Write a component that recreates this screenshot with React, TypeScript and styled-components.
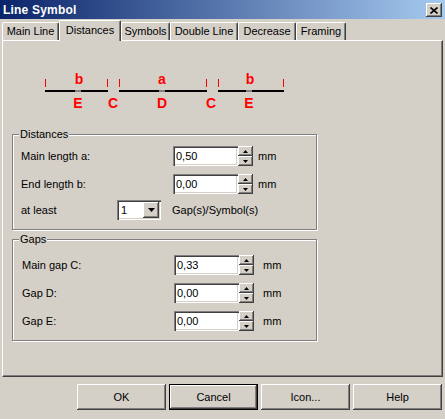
import React from 'react';
import styled, {createGlobalStyle, css} from 'styled-components';

const GlobalStyle = createGlobalStyle`
  html, body {
    margin: 0;
    padding: 0;
    background: #d4d0c8;
  }
  body {
    font-family: "Liberation Sans", Arial, sans-serif;
    font-size: 11px;
    color: #000;
  }
`;

const raised = css`
  background: #d4d0c8;
  box-shadow: inset -1px -1px 0 #404040, inset 1px 1px 0 #ffffff, inset -2px -2px 0 #808080;
`;

const sunken = css`
  background: #ffffff;
  box-shadow: inset 1px 1px 0 #808080, inset 2px 2px 0 #404040, inset -1px -1px 0 #ffffff, inset -2px -2px 0 #d4d0c8;
`;

const tabs = [
    {label: 'Main Line', w: 57},
    {label: 'Distances', w: 62, active: true},
    {label: 'Symbols', w: 49},
    {label: 'Double Line', w: 68},
    {label: 'Decrease', w: 58},
    {label: 'Framing', w: 50},
];

const UpArrow = () => (
    <svg width="5" height="3" viewBox="0 0 5 3"><polygon points="2.5,0 5,3 0,3" fill="#000"/></svg>
);
const DownArrow = ({w = 5, h = 3}: { w?: number; h?: number }) => (
    <svg width={w} height={h} viewBox={`0 0 ${w} ${h}`}><polygon points={`0,0 ${w},0 ${w / 2},${h}`} fill="#000"/></svg>
);

const SpinField = ({value}: { value: string }) => (
    <>
        <Field>{value}</Field>
        <Spinner>
            <SpinBtn><UpArrow/></SpinBtn>
            <SpinBtn><DownArrow/></SpinBtn>
        </Spinner>
    </>
);

const Diagram = () => (
    <DiagramSvg width="280" height="46" viewBox="0 0 280 46">
        <rect x="33" y="26" width="63" height="2" fill="#000"/>
        <rect x="107" y="26" width="88" height="2" fill="#000"/>
        <rect x="206" y="26" width="66" height="2" fill="#000"/>
        <rect x="63" y="26" width="6" height="2" fill="#808080"/>
        <rect x="147" y="26" width="6" height="2" fill="#808080"/>
        <rect x="234" y="26" width="6" height="2" fill="#808080"/>
        {[33, 95, 107, 194, 206, 271].map((x) => (
            <rect key={x} x={x} y="15" width="1" height="8" fill="#ff0000"/>
        ))}
        <g fill="#ff0000" fontFamily="Liberation Sans, Arial, sans-serif" fontWeight="bold" fontSize="14" textAnchor="middle">
            <text x="67" y="20">b</text>
            <text x="150" y="20">a</text>
            <text x="238" y="20">b</text>
            <text x="66" y="44">E</text>
            <text x="101" y="44">C</text>
            <text x="150" y="44">D</text>
            <text x="199" y="44">C</text>
            <text x="237" y="44">E</text>
        </g>
    </DiagramSvg>
);

const App = () => {
    return (
        <Window>
            <GlobalStyle/>
            <TitleBar>
                <Title>Line Symbol</Title>
                <CloseButton>
                    <svg width="8" height="7" viewBox="0 0 8 7">
                        <path d="M0.5 0.5 L7.5 6.5 M7.5 0.5 L0.5 6.5" stroke="#000" strokeWidth="1.6"/>
                    </svg>
                </CloseButton>
            </TitleBar>
            <TabStrip>
                {tabs.map((t) => (
                    <Tab key={t.label} $w={t.w} $active={!!t.active}>{t.label}</Tab>
                ))}
            </TabStrip>
            <Panel>
                <Diagram/>
                <GroupBox $top={5}>
                    <Legend>Distances</Legend>
                    <Row>
                        <Label $w={152}>Main length a:</Label>
                        <SpinField value="0,50"/>
                        <Unit $gap={5}>mm</Unit>
                    </Row>
                    <Row $mt={8}>
                        <Label $w={152}>End length b:</Label>
                        <SpinField value="0,00"/>
                        <Unit $gap={5}>mm</Unit>
                    </Row>
                    <Row $mt={6}>
                        <Label $w={96}>at least</Label>
                        <Combo>
                            <ComboText>1</ComboText>
                            <ComboBtn><DownArrow w={7} h={4}/></ComboBtn>
                        </Combo>
                        <Unit $gap={11}>Gap(s)/Symbol(s)</Unit>
                    </Row>
                </GroupBox>
                <GroupBox $top={9} $mt={3}>
                    <Legend>Gaps</Legend>
                    <Row>
                        <Label $w={153} $indent={1}>Main gap C:</Label>
                        <SpinField value="0,33"/>
                        <Unit $gap={9}>mm</Unit>
                    </Row>
                    <Row $mt={8}>
                        <Label $w={153} $indent={1}>Gap D:</Label>
                        <SpinField value="0,00"/>
                        <Unit $gap={9}>mm</Unit>
                    </Row>
                    <Row $mt={8}>
                        <Label $w={153} $indent={1}>Gap E:</Label>
                        <SpinField value="0,00"/>
                        <Unit $gap={9}>mm</Unit>
                    </Row>
                </GroupBox>
            </Panel>
            <ButtonRow>
                <Button>OK</Button>
                <Button $default>Cancel</Button>
                <Button>Icon...</Button>
                <Button>Help</Button>
            </ButtonRow>
        </Window>
    );
};

export default App;

const Window = styled.div`
  width: 445px;
  height: 419px;
  display: flex;
  flex-direction: column;
  background: #d4d0c8;
  overflow: hidden;
`

const TitleBar = styled.div`
  height: 19px;
  flex: 0 0 19px;
  display: flex;
  align-items: center;
  justify-content: space-between;
  padding: 0 3px 0 3px;
  background: linear-gradient(to right, #0a246a, #a6caf0);
`

const Title = styled.span`
  color: #ffffff;
  font-weight: bold;
  font-size: 12px;
  letter-spacing: 0.2px;
`

const CloseButton = styled.div`
  ${raised};
  width: 16px;
  height: 14px;
  display: flex;
  align-items: center;
  justify-content: center;
  margin-top: 1px;
`

const TabStrip = styled.div`
  display: flex;
  align-items: flex-end;
  height: 20px;
  margin-top: 1px;
  padding-left: 2px;
  position: relative;
  z-index: 1;
`

const Tab = styled.div<{ $w: number; $active?: boolean }>`
  box-sizing: border-box;
  width: ${(p) => p.$w}px;
  height: ${(p) => (p.$active ? 21 : 18)}px;
  margin-bottom: ${(p) => (p.$active ? -1 : 0)}px;
  padding-top: ${(p) => (p.$active ? 3 : 2)}px;
  text-align: center;
  font-size: 11px;
  background: #d4d0c8;
  border-top: 1px solid #ffffff;
  border-left: 1px solid #ffffff;
  border-right: 1px solid #404040;
  border-radius: 2px 2px 0 0;
  box-shadow: inset -1px 0 0 #808080;
  white-space: nowrap;
`

const Panel = styled.div`
  box-sizing: border-box;
  height: 337px;
  margin: 0 2px;
  padding: 0 0 0 9px;
  border-top: 1px solid #ffffff;
  border-left: 1px solid #ffffff;
  border-right: 1px solid #404040;
  border-bottom: 1px solid #404040;
  box-shadow: inset -1px -1px 0 #808080;
  display: flex;
  flex-direction: column;
  align-items: flex-start;
`

const DiagramSvg = styled.svg`
  display: block;
  margin-top: 23px;
`

const GroupBox = styled.fieldset<{ $top: number; $mt?: number }>`
  box-sizing: border-box;
  width: 305px;
  margin: ${(p) => p.$mt ?? 18}px 0 0 0;
  padding: ${(p) => p.$top}px 8px 9px 8px;
  border: 1px solid #808080;
  box-shadow: 1px 1px 0 #ffffff, inset 1px 1px 0 #ffffff;
  min-width: 0;
`

const Legend = styled.legend`
  margin-left: -2px;
  padding: 0 1px;
  font-size: 11px;
  line-height: 13px;
  background: #d4d0c8;
`

const Row = styled.div<{ $mt?: number }>`
  display: flex;
  align-items: center;
  height: 20px;
  margin-top: ${(p) => p.$mt ?? 0}px;
`

const Label = styled.span<{ $w: number; $indent?: number }>`
  box-sizing: border-box;
  width: ${(p) => p.$w}px;
  padding-left: ${(p) => p.$indent ?? 0}px;
  flex: 0 0 auto;
`

const Field = styled.div`
  ${sunken};
  box-sizing: border-box;
  width: 65px;
  height: 20px;
  padding: 0 0 0 3px;
  display: flex;
  align-items: center;
`

const Spinner = styled.div`
  display: flex;
  flex-direction: column;
  width: 15px;
  height: 20px;
`

const SpinBtn = styled.div`
  ${raised};
  height: 10px;
  display: flex;
  align-items: center;
  justify-content: center;

  svg {
    display: block;
  }
`

const Unit = styled.span<{ $gap: number }>`
  margin-left: ${(p) => p.$gap}px;
`

const Combo = styled.div`
  ${sunken};
  box-sizing: border-box;
  width: 44px;
  height: 20px;
  padding: 2px;
  display: flex;
  align-items: center;
  justify-content: space-between;
`

const ComboText = styled.span`
  padding-left: 2px;
`

const ComboBtn = styled.div`
  ${raised};
  width: 16px;
  height: 16px;
  display: flex;
  align-items: center;
  justify-content: center;
`

const ButtonRow = styled.div`
  display: flex;
  justify-content: flex-end;
  gap: 3px;
  margin-top: 7px;
  padding-right: 3px;
`

const Button = styled.button<{ $default?: boolean }>`
  box-sizing: border-box;
  width: 89px;
  height: 26px;
  padding: 0;
  border: none;
  font-family: "Liberation Sans", Arial, sans-serif;
  font-size: 11px;
  color: #000;
  background: #d4d0c8;
  box-shadow: ${(p) =>
    p.$default
        ? 'inset 0 0 0 1px #000, inset -2px -2px 0 #404040, inset 2px 2px 0 #ffffff, inset -3px -3px 0 #808080'
        : 'inset -1px -1px 0 #404040, inset 1px 1px 0 #ffffff, inset -2px -2px 0 #808080'};
`
